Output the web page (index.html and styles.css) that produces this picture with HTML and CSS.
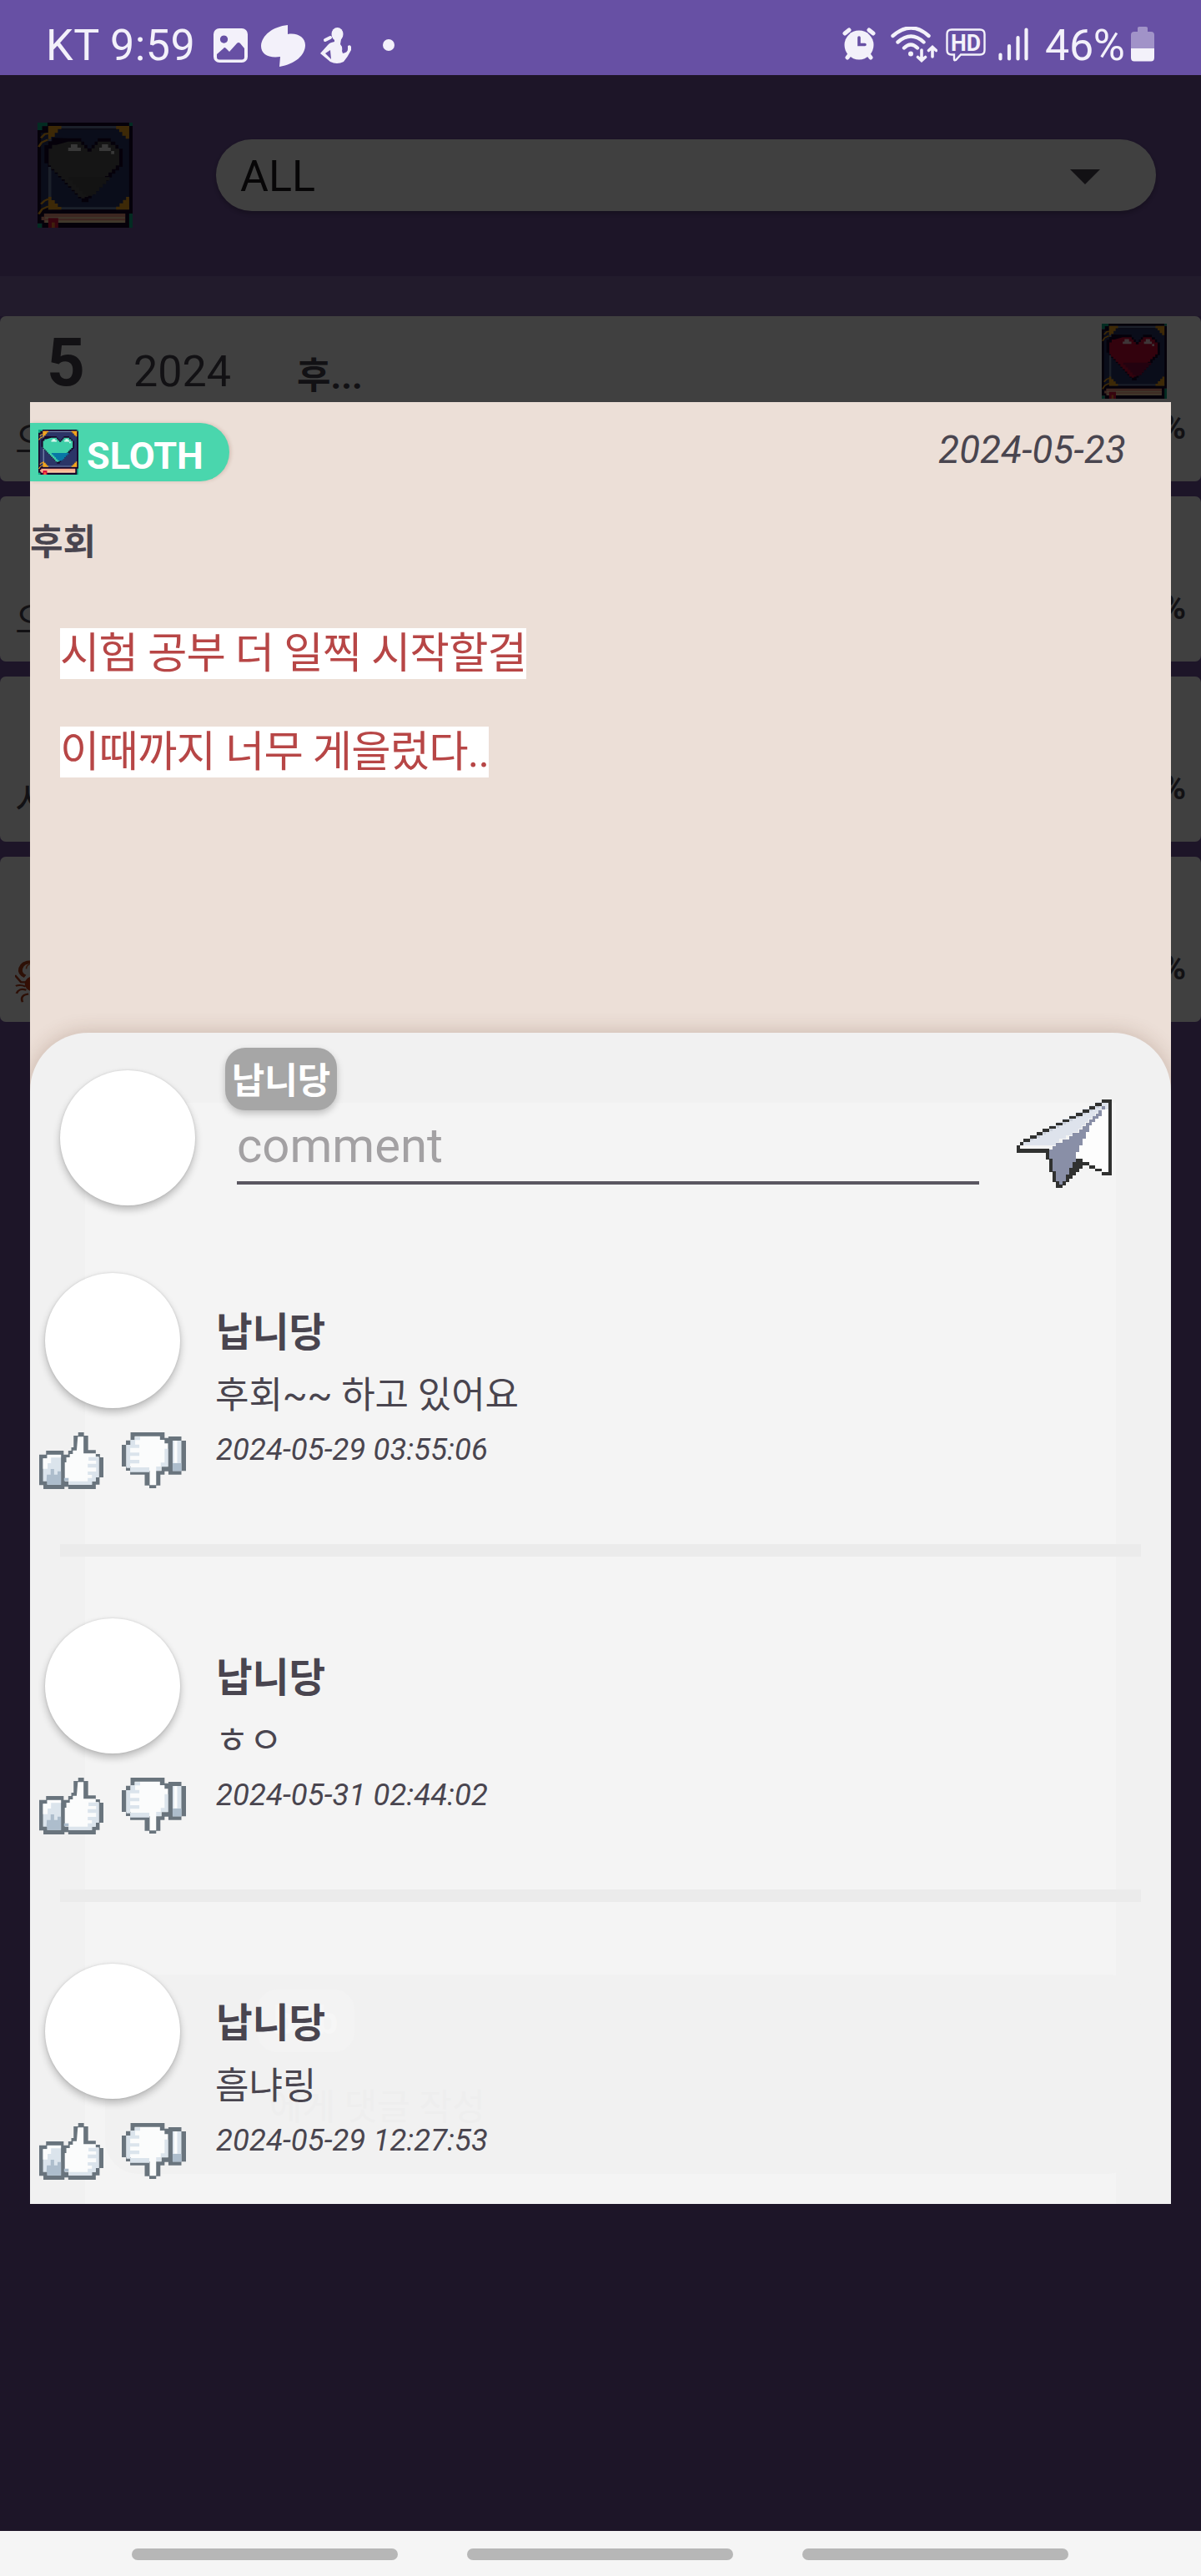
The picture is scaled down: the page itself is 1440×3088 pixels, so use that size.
FILE: index.html
```html
<!DOCTYPE html>
<html lang="ko">
<head>
<meta charset="utf-8">
<title>후회</title>
<link rel="stylesheet" href="styles.css">
</head>
<body>
<svg class="defs" width="0" height="0" aria-hidden="true">
  <symbol id="book" viewBox="98 441 248 378" preserveAspectRatio="none">
    <path fill="#0fae86" d="M98 441h28v13h-14v14h-14zM337 441h9v12h-9zM336 768h10v51h-10zM98 803h12v16h-12z"/>
    <path fill="#17072b" d="M124 441h213v12h9v315h-9v51H110v-16H98V468h12v-14h14z"/>
    <path fill="#2b3567" d="M107 478h19v270h-19zM133 465h204v289H133z"/>
    <path fill="#6d7fa8" d="M126 453h211v10H134v291h-8zM134 745h203v8H134z"/>
    <path fill="#f4a51c" d="M126 453h34v11h-9v14h-8v14h-10v8h-7zM303 453h34v46h-9v-11h-9v-13h-8v-11h-8zM337 708v46h-34v-11h9v-12h9v-12h8v-11zM126 708h8v12h9v12h8v12h9v10h-34z"/>
    <path fill="none" stroke="#f4a51c" stroke-width="6" d="M107 496l10-14 9-2M101 528l8-16 16-10M107 734l9-12 10-6M101 770l9-18 16-10"/>
    <path class="cover" d="M178 497h34v12h8v12h8v12h11v-12h8v-12h8v-12h34v12h12v12h8v14h11v65h-9v13h-10v12h-9v13h-9v12h-9v13h-8v12h-9v13h-9v12h-9v13h-8v14h-18v-14h-9v-13h-9v-12h-8v-13h-9v-12h-9v-13h-8v-12h-9v-13h-9v-12h-9v-13h-9v-13h-9v-65h10v-14h10v-12h12z"/>
    <path class="heart" d="M178 509h34v12h8v12h8v12h11v-12h8v-12h8v-12h34v12h12v14h10v60h-9v13h-10v12h-9v13h-9v12h-9v13h-9v12h-9v13h-9v12h-8v13h-9v5h-9v-5h-9v-13h-8v-12h-9v-13h-9v-12h-8v-13h-9v-12h-9v-13h-9v-12h-9v-13h-6v-60h9v-14h11z"/>
    <path class="heart-low" d="M180 637h106v12h-9v13h-9v12h-9v13h-8v12h-9v5h-18v-5h-9v-12h-8v-13h-9v-12h-9v-13h-9z"/>
    <path fill="#fff" opacity=".82" d="M185 519h17v12h9v12h-33v-12h7zM266 519h16v12h7v12h-30v-12h7zM290 543h8v11h-8z"/>
    <path fill="#f39c84" d="M115 768h212v33H115v-9h-7v-13h7z"/>
    <path fill="#ffe1b0" d="M118 781h208v5H118zM118 793h208v8H118z"/>
    <path fill="#db123e" d="M126 784h26v35h-26z"/><path fill="#f98032" class="ribbon" d="M135 800h8v19h-8z"/>
  </symbol>
  <symbol id="like" viewBox="102 651 168 204" preserveAspectRatio="none">
    <path fill="#69747d" d="M204 651h15v12h11v52h20v14h11v12h9v72h-10v26h-10v16h-72v-8h-10v8h-55v-14h-11V731h18v-14h46v14h12v-14h8v-12h6v-42h12z"/>
    <path fill="#fbfcfc" d="M203 667h15v60h32v12h8v74h-8v14h-10v12h-61v-12h-10v-68h4v-18h9v-12h8v-13h10z"/>
    <path fill="#dbe4ec" d="M231 740h27v73h-8v14h-10v12h-61v-12h50v-12h11v-11h-11v-12h22v-14h-22v-14h22v-11h-20z"/>
    <path fill="#dbe4ec" d="M112 745h11v-14h36v108h-36v-12h-11z"/>
    <path fill="#fbfcfc" d="M112 745h11v-13h36v10h-26v20h-9v20h-12z"/>
    <path fill="#adbdcc" d="M122 803h10v-20h9v20h9v-12h9v48h-36v-12h-2zM167 815h12v11h-12z"/>
  </symbol>
  <symbol id="dislike" viewBox="318 651 168 204" preserveAspectRatio="none">
    <path fill="#69747d" d="M341 651h89v20h10v-5h34v15h12v109h-12v13h-34v-12h-10v12h-11v39h-11v10h-18v-10h-12v-39h-38v-14h-11v-15h-11v-78h11v-16h12z"/>
    <path fill="#fbfcfc" d="M352 665h66v13h12v13h9v84h-17v15h-14v51h-17v-51h-50v-15h-11v-79h11v-17h11z"/>
    <path fill="#dbe4ec" d="M330 696h11v-17h11v-12h14v12h-13v16h11v12h-24v17h24v12h-24v14h24v13h-24v14h50v17h-50v-15h-10zM408 774h12v-14h10v-50h9v64h-18v15h-13z"/>
    <path fill="#dbe4ec" d="M451 681h23v109h-23z"/><path fill="#fbfcfc" d="M455 681h8v80h-8z"/>
    <path fill="#adbdcc" d="M451 762h23v28h-23z"/>
  </symbol>
</svg>

<div class="screen">
  <header class="status">
    <span class="status-text carrier">KT 9:59</span>
    <svg class="st-image" viewBox="0 0 41 41"><path fill="currentColor" fill-rule="evenodd" d="M7 0h27a7 7 0 0 1 7 7v27a7 7 0 0 1-7 7H7a7 7 0 0 1-7-7V7a7 7 0 0 1 7-7zM12.500 8.500a4.600 4.600 0 1 0 .01 0zM4 31v3.500a3 3 0 0 0 3 3h27a3 3 0 0 0 3-3V24l-5-6q-2-2-4 0l-9 10-4-4q-2-2-3 0z"/></svg>
    <svg class="st-swirl" viewBox="0 0 53 50"><path fill="currentColor" d="M32 0v11C44 9 53 15 53 24c0 12-12 23-31 26l1-12C9 40 0 35 0 25 1 12 14 2 32 0z"/></svg>
    <svg class="st-figure" viewBox="0 0 38 43"><g fill="currentColor"><ellipse cx="20.500" cy="8" rx="7" ry="8"/><path d="M17 14h8l-1 6q3 3 2 8l1 3q6-1 6-5v-4q3-2 4 1v4q-4 8-9 14-8 4-16 0L0 31l9-10q2-3 8-4z"/></g><path d="M12 27l-6 4 7 7z" fill="#6750a4"/><path fill="none" stroke="currentColor" stroke-width="4" stroke-linecap="round" d="M6 15l6-3"/></svg>
    <span class="st-dot"></span>
    <svg class="st-alarm" viewBox="0 0 40 40"><ellipse cx="20" cy="21" rx="17.500" ry="17.500" fill="currentColor"/><path stroke="currentColor" stroke-width="5" stroke-linecap="round" d="M3 7l5-4M37 7l-5-4M6 36l3-4M34 36l-3-4"/><path fill="none" stroke="#6750a4" stroke-width="3.600" stroke-linecap="round" d="M20 12v8.500h7"/></svg>
    <svg class="st-wifi" viewBox="0 0 56 43"><g fill="none" stroke="currentColor" stroke-width="4.400" stroke-linecap="round"><path d="M2.500 11q22-19 43 0M8.500 18.500q16-14 31 0M16 25.500q8-8 16 0"/><path stroke-width="3.600" d="M37 28v12M32.500 36.500l4.500 4 4.500-4M50 36V25M45.500 28.500l4.500-4 4.500 4"/></g><circle cx="24" cy="32.500" r="3" fill="currentColor"/></svg>
    <svg class="st-hd" viewBox="0 0 48 40"><path fill="none" stroke="currentColor" stroke-width="2.400" d="M7 1.500h34q5.500 0 5.500 5.500v19q0 5.500-5.500 5.500H18l-6 6.500q-2 1-2-1v-5.500H7q-5.500 0-5.500-5.500V7Q1.500 1.500 7 1.500z"/><text x="24" y="26.500" text-anchor="middle" textLength="36" lengthAdjust="spacingAndGlyphs" class="hd-text">HD</text></svg>
    <svg class="st-signal" viewBox="0 0 36 40"><path stroke="currentColor" stroke-width="4.200" stroke-linecap="round" d="M2.500 32.500v5M13 22v15.500M23.500 12v25.500M33.500 2.500v35"/></svg>
    <span class="status-text percent">46%</span>
    <svg class="st-battery" viewBox="0 0 28 42"><path fill="currentColor" opacity=".42" d="M8 1.500Q8 0 10 0h8q2 0 2 1.500V6h4q4 0 4 4v16H0V10q0-4 4-4h4z"/><path fill="currentColor" d="M0 26h28v11q0 4.500-4 4.500H4q-4 0-4-4.500z"/></svg>
  </header>

  <main class="app">
    <div class="toolbar">
      <svg class="book book-black toolbar-book"><use href="#book"/></svg>
      <div class="select"><span>ALL</span><i class="caret"></i></div>
    </div>
    <div class="entries">
      <section class="entry">
        <div class="entry-head"><b class="month">5</b><span class="year">2024</span><b class="subject">후...</b><svg class="book book-red entry-book"><use href="#book"/></svg></div>
        <div class="entry-foot"><span>으</span><b>0%</b></div>
      </section>
      <section class="entry"><div class="entry-head"></div><div class="entry-foot"><span>으</span><b>0%</b></div></section>
      <section class="entry"><div class="entry-head"></div><div class="entry-foot"><span>시</span><b>0%</b></div></section>
      <section class="entry"><div class="entry-head"></div><div class="entry-foot"><svg class="crab" viewBox="40 1310 60 150" preserveAspectRatio="none"><path d="M84 1316q-24 0-29 22-4 18 12 28" fill="none" stroke="#b3401b" stroke-width="11"/><path d="M70 1340q0-14 14-18" fill="none" stroke="#d4663a" stroke-width="4"/><ellipse cx="90" cy="1392" rx="24" ry="27" fill="#ce3c16"/><path d="M40 1362l16 24h14M42 1399q12-6 26 2M44 1425q6-20 26-12M60 1455q-8-24 16-28" fill="none" stroke="#b23c18" stroke-width="6"/></svg><b>0%</b></div></section>
    </div>
    <div class="scrim"></div>

    <article class="dialog">
      <div class="dialog-top">
        <div class="mood"><svg class="book book-teal mood-book"><use href="#book"/></svg><b>SLOTH</b></div>
        <time class="diary-date">2024-05-23</time>
      </div>
      <h1 class="title">후회</h1>
      <div class="diary"><p><mark>시험 공부 더 일찍 시작할걸</mark></p><p><mark>이때까지 너무 게을렀다..</mark></p></div>

      <section class="sheet">
        <div class="reply-ghost"><b>bob</b><span>에게 댓글 작성</span></div>
        <div class="composer">
          <div class="avatar"></div>
          <div class="field"><b class="nick-tag">납니당</b><div class="input">comment</div></div>
          <svg class="send" viewBox="357 294 342 318" shape-rendering="crispEdges">
            <path fill="#fdfdfd" d="M663 330h24v224h-23v-12h-24v-12h-23v-12h-23v-12h-24v-24h12v-24h12v-24h12v-24h12v-24h12v-12h12v-12h12v-12h11z"/>
            <path fill="#dee3ec" d="M663 306h24v24h-12v-12h-12v14h-12v10h-11v12h-12v10h-12v12h-12v12h-12v12h-12v12h-23v12h-24v12h-23v12h-12v10H369v-11h12v-12h24v-12h24v-12h23v-12h24v-12h24v-12h23v-12h24v-12h24v-12h23v-12h24v-12h23v-13h23z"/>
            <path fill="#c9cfda" d="M404 435h12v6h-12zM428 423h12v10h-12zM452 411h11v10h-11zM476 399h11v10h-11zM500 387h11v9h-11zM523 375h11v9h-11zM547 363h11v9h-11zM571 351h11v9h-11zM595 340h11v9h-11zM618 328h11v9h-11zM642 316h11v9h-11z"/>
            <path fill="#898fa7" d="M663 318h12v12h-12v24h-11v10h-12v12h-12v12h-11v24h-11v24h-12v24h-12v24h-12v36h-12v24h-12v24h-12v24h-12v12h-12v-12h-12v-35h-12v-45h-12v-37h12v-12h12v-12h24v-12h24v-12h12v-12h24v-12h12v-12h12v-12h12v-12h11v-12h12v-10h11v-12h11z"/>
            <path fill="#303130" d="M663 294h36v272h-36v-12h24V306h-24zM640 306h23v12h-23zM617 318h23v12h-23zM594 330h23v12h-23zM570 342h24v12h-24zM546 354h24v10h-24zM522 366h24v10h-24zM498 377h24v11h-24zM474 389h24v11h-24zM450 400h24v11h-24zM428 412h23v11h-23zM405 424h23v11h-23zM381 435h24v12h-24zM369 447h12v12h-12zM357 459h12v12h105v36h12v46h12v36h12v12h12v-12h12v-24h12v-24h12v-23h12v-12h24v12h24v12h-24v12h-12v12h-12v12h-12v12h-12v12h-12v12h-12v12h-24v-24h-12v-35h-12v-46h-12v-24H357zM617 530h23v12h-23zM640 542h23v11h-23z"/>
          </svg>
        </div>
        <ul class="comments">
          <li class="comment">
            <div class="aside"><div class="avatar"></div><div class="votes"><svg><use href="#like"/></svg><svg><use href="#dislike"/></svg></div></div>
            <div class="body"><b>납니당</b><p>후회~~ 하고 있어요</p><time>2024-05-29 03:55:06</time></div>
          </li>
          <li class="comment">
            <div class="aside"><div class="avatar"></div><div class="votes"><svg><use href="#like"/></svg><svg><use href="#dislike"/></svg></div></div>
            <div class="body"><b>납니당</b><p>ㅎㅇ</p><time>2024-05-31 02:44:02</time></div>
          </li>
          <li class="comment">
            <div class="aside"><div class="avatar"></div><div class="votes"><svg><use href="#like"/></svg><svg><use href="#dislike"/></svg></div></div>
            <div class="body"><b>납니당</b><p>흠냐링</p><time>2024-05-29 12:27:53</time></div>
          </li>
        </ul>
      </section>
    </article>
  </main>

  <nav class="navbar"><i></i><i></i><i></i></nav>
</div>
</body>
</html>
```

FILE: styles.css
```css
* { box-sizing: border-box; }
body, h1, p, ul { margin: 0; padding: 0; }
body { font-family: Roboto, "Noto Sans CJK KR", sans-serif; color: #49454f; }
svg { display: block; flex: none; }
.defs { position: absolute; }
.screen { width: 1440px; height: 3088px; display: flex; flex-direction: column; overflow: hidden; }

/* status bar */
.status { height: 90px; flex: none; background: #6750a4; color: #f3f1fa; display: flex; align-items: flex-start; padding: 0 56px 0 55px; }
.status-text { font-size: 52px; line-height: 60px; margin-top: 25px; white-space: nowrap; }
.carrier { width: 201px; letter-spacing: .5px; }
.percent { width: 103px; margin-left: 20px; letter-spacing: -.3px; }
.st-image { width: 41px; height: 41px; margin-top: 34px; }
.st-swirl { width: 53px; height: 50px; margin: 30px 0 0 16px; }
.st-figure { width: 38px; height: 43px; margin: 33px 0 0 18px; }
.st-dot { width: 14px; height: 14px; border-radius: 50%; background: currentColor; margin: 47px 0 0 37px; }
.st-alarm { width: 40px; height: 40px; margin: 33px 0 0 auto; }
.st-wifi { width: 56px; height: 43px; margin: 32px 0 0 18px; }
.st-hd { width: 48px; height: 40px; margin: 34px 0 0 10px; }
.hd-text { font: 700 27px Roboto, sans-serif; fill: currentColor; }
.st-signal { width: 36px; height: 40px; margin: 33px 0 0 15px; }
.st-battery { width: 28px; height: 42px; margin-top: 32px; }

/* diary list behind the dialog */
.app { position: relative; flex: 1; background: #7454a0; }
.toolbar { height: 289px; padding: 57px 54px 0 45px; display: flex; gap: 100px; background: linear-gradient(#7454a0 241px, #886cb0 241px); }
.toolbar-book { width: 114px; height: 126px; }
.select { flex: 1; height: 86px; margin-top: 20px; border-radius: 43px; background: #fff; display: flex; align-items: center; justify-content: space-between; padding: 4px 67px 0 29px; font-size: 52px; line-height: 60px; color: #1c1b1f; box-shadow: 0 3px 6px rgba(0,0,0,.25); }
.caret { border: 18px solid transparent; border-top-color: #49454f; border-bottom: 0; }
.entries { display: flex; flex-direction: column; gap: 18px; }
.entry { height: 198px; background: #fff; border-radius: 7px; }
.entry-head { height: 101px; display: flex; align-items: flex-start; padding: 0 41px 0 56px; }
.month { width: 104px; font-size: 80px; line-height: 80px; margin-top: 16px; }
.year { width: 196px; font-size: 52px; line-height: 60px; margin-top: 37px; }
.subject { font-size: 44px; line-height: 60px; margin-top: 42px; }
.entry-book { width: 78px; height: 90px; margin: 9px 0 0 auto; }
.entry-foot { height: 97px; display: flex; justify-content: space-between; padding: 0 18px; }
.entry-foot span { font-size: 45px; line-height: 60px; margin-top: 19px; }
.entry-foot b { font-size: 40px; line-height: 50px; margin: 8px 0 0 auto; }
.crab { width: 27px; height: 52px; margin-top: 23px; }
.scrim { position: absolute; inset: 0; background: rgba(0,0,0,.75); }

.cover { fill: #17072b; }
.book-black { --heart: #555; --heart-low: #4c4c4c; }
.book-red { --heart: #c90b35; --heart-low: #8c0b3e; }
.book-teal { --heart: #3fcfa8; --heart-low: #0877a5; }
.heart { fill: var(--heart); }
.heart-low { fill: var(--heart-low); }

/* diary dialog */
.dialog { position: absolute; left: 36px; top: 392px; width: 1368px; height: 2160px; background: #ecdfd7; display: flex; flex-direction: column; overflow: hidden; }
.dialog-top { height: 95px; flex: none; padding: 25px 54px 0 0; display: flex; justify-content: space-between; }
.mood { width: 239px; height: 70px; border-radius: 0 35px 35px 0; background: #4ad6ad; color: #fff; display: flex; padding: 8px 0 0 10px; gap: 10px; box-shadow: 2px 0 4px rgba(120,70,50,.2); }
.mood-book { width: 48px; height: 54px; }
.mood b { font-size: 45px; line-height: 54px; margin-top: 5px; }
.diary-date { font-size: 45.500px; line-height: 54px; font-style: italic; margin-top: 6px; letter-spacing: .2px; }
.title { font-size: 43px; line-height: 60px; font-weight: 700; margin-top: 43px; }
.diary { flex: none; padding: 45px 36px 0; color: #b74646; font-size: 51.500px; letter-spacing: -.88px; }
.diary p { line-height: 118px; height: 118px; }
.diary mark { color: inherit; background: #fff; }

/* comments sheet */
.sheet { position: relative; flex: none; height: 1404px; margin-top: auto; border-radius: 70px 70px 0 0; background: linear-gradient(#f4f4f4, #f4f4f4) 66px 84px / 1236px 1320px no-repeat, #f1f1f1; box-shadow: 0 0 24px rgba(90,50,30,.24); }
.avatar { width: 162px; height: 162px; flex: none; border-radius: 50%; background: #fff; box-shadow: 0 5px 10px rgba(0,0,0,.24), 0 0 3px rgba(0,0,0,.12); }
.composer { position: relative; display: flex; height: 288px; padding: 0 71px 0 36px; }
.composer .avatar { margin-top: 45px; }
.field { width: 904px; margin: 18px 0 0 36px; }
.nick-tag { display: block; width: 134px; height: 75px; border-radius: 24px; background: #a6a6a6; color: #fff; font-size: 43px; line-height: 80px; text-align: center; box-shadow: 0 4px 8px rgba(0,0,0,.22); }
.input { margin-left: 14px; width: 890px; height: 89px; border-bottom: 4px solid #5a5761; font-size: 58px; line-height: 85px; color: #a3a1a3; }
.send { width: 114px; height: 106px; margin: 80px 0 0 auto; }
.comments { position: relative; list-style: none; }
.comment { height: 414px; display: flex; padding-left: 11px; }
.comment + .comment::before { content: ""; position: absolute; left: 36px; width: 1296px; height: 15px; margin-top: -89px; background: #ebebeb; }
.aside { width: 176px; }
.aside .avatar { margin-left: 7px; }
.votes { display: flex; gap: 22px; margin-top: 29px; }
.votes svg { width: 77px; height: 68px; }
.body { margin-left: 36px; color: #49454f; white-space: nowrap; }
.body b { display: block; font-size: 47.500px; line-height: 60px; margin-top: 42px; }
.body p { font-size: 44px; line-height: 60px; margin: 15px 0 0 -1px; letter-spacing: -.1px; }
.body time { display: block; font-size: 36.500px; line-height: 50px; font-style: italic; margin-top: 10px; letter-spacing: .08px; }
.reply-ghost { position: absolute; left: 90px; top: 1129px; width: 1242px; height: 239px; border-radius: 40px; background: #f1f1f1; color: #eeeeee; font-size: 46px; }
.reply-ghost b { position: absolute; left: 182px; top: 18px; width: 117px; height: 75px; border-radius: 24px; background: #f3f3f3; color: #f6f6f6; line-height: 75px; text-align: center; }
.reply-ghost span { position: absolute; left: 197px; top: 124px; font-size: 43px; }

/* gesture bar */
.navbar { height: 54px; flex: none; background: #f5f5f5; display: flex; gap: 83px; padding: 21px 0 0 158px; }
.navbar i { width: 319px; height: 14px; border-radius: 7px; background: #b7b7b7; }
```
